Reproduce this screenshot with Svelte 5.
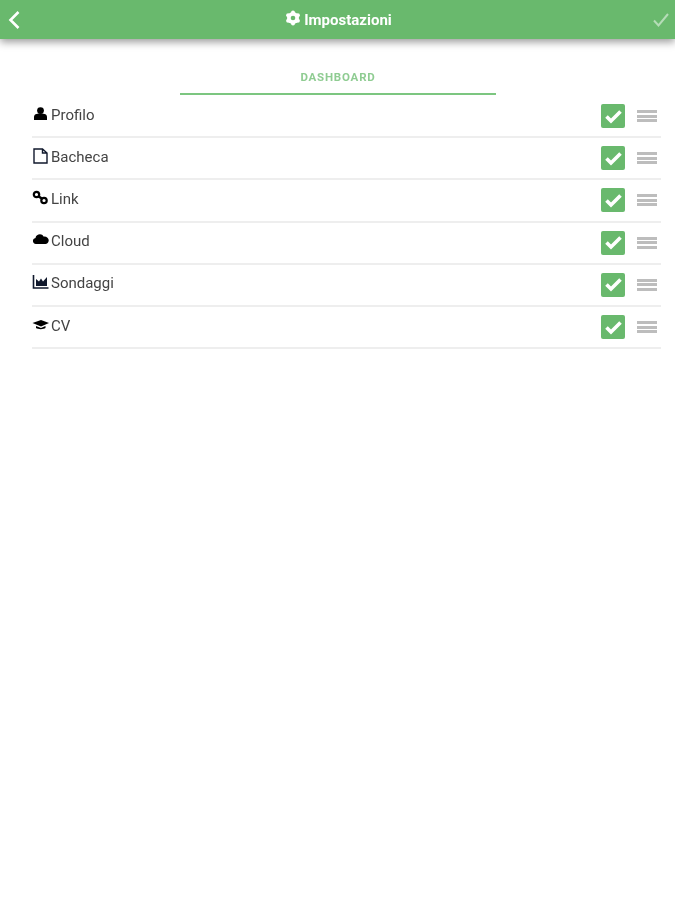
<script>
  const rows = [
    { id: 'profilo', label: 'Profilo' },
    { id: 'bacheca', label: 'Bacheca' },
    { id: 'link', label: 'Link' },
    { id: 'cloud', label: 'Cloud' },
    { id: 'sondaggi', label: 'Sondaggi' },
    { id: 'cv', label: 'CV' }
  ];
</script>

<div class="page">
  <header class="bar">
    <svg class="back" width="14" height="20" viewBox="0 0 14 20" aria-hidden="true">
      <path d="M11.5 2 L3.5 10 L11.5 18" fill="none" stroke="#fff" stroke-width="2.6" />
    </svg>
    <div class="title">
      <svg width="16" height="16" viewBox="0 0 16 16" aria-hidden="true">
        <g fill="#fff">
          <circle cx="8" cy="8" r="6" />
          <circle cx="8" cy="2.4" r="2" />
          <circle cx="8" cy="13.6" r="2" />
          <circle cx="3.1" cy="5.2" r="2" />
          <circle cx="12.9" cy="5.2" r="2" />
          <circle cx="3.1" cy="10.8" r="2" />
          <circle cx="12.9" cy="10.8" r="2" />
        </g>
        <circle cx="8" cy="8" r="2.3" fill="#69b96d" />
      </svg>
      <span>Impostazioni</span>
    </div>
    <svg class="ok" width="18" height="16" viewBox="0 0 18 16" aria-hidden="true">
      <path d="M2 8.5 L6.5 13.5 L16 2" fill="none" stroke="#b5dcb7" stroke-width="2" />
    </svg>
  </header>

  <nav class="tabs">
    <div class="tab">DASHBOARD</div>
  </nav>

  <ul class="list">
    {#each rows as row}
      <li class="row">
        <span class="label">
          <svg class="icon" width="17" height="16" viewBox="0 0 17 16" aria-hidden="true">
            {#if row.id === 'profilo'}
              <circle cx="8.5" cy="4.6" r="3.4" fill="#000" />
              <path d="M2 14 V11 C2 8.5 4 7.5 8.5 7.5 C13 7.5 15 8.5 15 11 V14 Z" fill="#000" />
            {:else if row.id === 'bacheca'}
              <path d="M2 1 H10.5 L15 5 V15 H2 Z M10.5 1 V5 H15" fill="none" stroke="#10182c" stroke-width="1.4" />
            {:else if row.id === 'link'}
              <circle cx="4.5" cy="4.5" r="2.7" fill="none" stroke="#000" stroke-width="2.2" />
              <circle cx="12" cy="10.5" r="2.7" fill="none" stroke="#000" stroke-width="2.2" />
              <path d="M6 6 L10.5 9" stroke="#000" stroke-width="2.4" />
            {:else if row.id === 'cloud'}
              <path d="M4 12 C0 12 0 6.5 3.5 6 C4 2 10 1 11.5 4.5 C15 4 17.5 7 16.5 9.5 C16 11 15 12 13.5 12 Z" fill="#000" />
            {:else if row.id === 'sondaggi'}
              <path d="M1.5 1 V14 H16.5" fill="none" stroke="#10182c" stroke-width="1.6" />
              <path d="M4 12 V5 L7 7.5 L9 4.5 L11 7.5 L15 3 V12 Z" fill="#10182c" />
            {:else}
              <path d="M0.5 6 L9 3 L17 6 L9 9.5 Z" fill="#000" />
              <path d="M4 9 V11 C6 12.5 11.5 12.5 13.5 11 V9 L9 11 Z" fill="#000" />
            {/if}
          </svg>
          <span class="text">{row.label}</span>
        </span>
        <span class="check">
          <svg width="19" height="15" viewBox="0 0 19 15" aria-hidden="true">
            <path d="M2.5 7.5 L7 12 L16.5 2.5" fill="none" stroke="#fff" stroke-width="3.6" />
          </svg>
        </span>
        <span class="handle"><i></i><i></i><i></i></span>
      </li>
    {/each}
  </ul>
</div>

<style>
  :global(body) {
    margin: 0;
    background: #fff;
  }
  .page {
    width: 675px;
    height: 900px;
    font-family: Roboto, "Liberation Sans", sans-serif;
    overflow: hidden;
    filter: blur(0.45px);
  }
  .bar {
    height: 39px;
    background: #69b96d;
    box-shadow: 0 3px 8px rgba(0, 0, 0, 0.4);
    display: flex;
    align-items: center;
    justify-content: space-between;
    padding: 0 5px 0 7px;
  }
  .title {
    display: flex;
    align-items: center;
    gap: 3px;
    color: #fff;
    font-size: 15px;
    font-weight: 700;
    margin-left: 4px;
  }
  .title svg {
    margin-top: -3px;
  }
  .tabs {
    display: flex;
    justify-content: center;
    margin-top: 31px;
  }
  .tab {
    width: 316px;
    height: 25px;
    box-sizing: border-box;
    text-align: center;
    font-size: 11.5px;
    font-weight: 700;
    letter-spacing: 0.8px;
    color: #8fcc92;
    border-bottom: 2px solid #7cc680;
    margin-left: 1px;
  }
  .list {
    list-style: none;
    margin: 1px 14px 0 32px;
    padding: 0;
  }
  .row {
    height: 40.2px;
    border-bottom: 2px solid #eeeeee;
    display: flex;
    align-items: center;
  }
  .label {
    flex: 1;
    display: flex;
    align-items: flex-start;
    gap: 2px;
    color: #444;
    font-size: 15px;
  }
  .icon {
    margin-top: -3px;
  }
  .text {
    line-height: 17px;
    margin-top: -2px;
  }
  .check {
    width: 24px;
    height: 24px;
    background: #69b96d;
    border-radius: 2px;
    display: flex;
    align-items: center;
    justify-content: center;
    margin-right: 12px;
  }
  .handle {
    width: 20px;
    margin-right: 4px;
    display: flex;
    flex-direction: column;
    gap: 1.5px;
  }
  .handle i {
    display: block;
    height: 3px;
    background: #bdbdbd;
  }
</style>
